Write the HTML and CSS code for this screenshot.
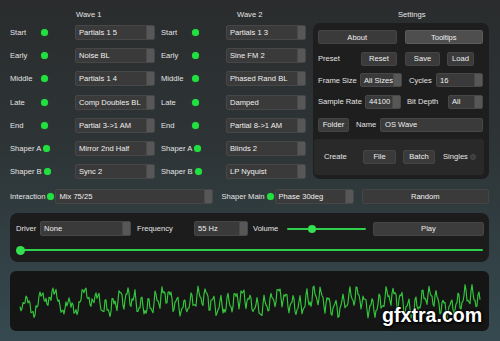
FILE: index.html
```html
<!DOCTYPE html>
<html>
<head>
<meta charset="utf-8">
<link rel="stylesheet" href="styles.css">
</head>
<body>
<div class="app">
  <div class="top">
    <div class="col wave">
      <div class="hdr h1">Wave 1</div>
      <div class="rows">
        <div class="row"><span class="lab">Start</span><span class="dot"></span><div class="dd"><span>Partials 1 5</span><i></i></div></div>
        <div class="row"><span class="lab">Early</span><span class="dot"></span><div class="dd"><span>Noise BL</span><i></i></div></div>
        <div class="row"><span class="lab">Middle</span><span class="dot"></span><div class="dd"><span>Partials 1 4</span><i></i></div></div>
        <div class="row"><span class="lab">Late</span><span class="dot"></span><div class="dd"><span>Comp Doubles BL</span><i></i></div></div>
        <div class="row"><span class="lab">End</span><span class="dot"></span><div class="dd"><span>Partial 3-&gt;1 AM</span><i></i></div></div>
        <div class="row"><span class="lab">Shaper A</span><span class="dot"></span><div class="dd"><span>Mirror 2nd Half</span><i></i></div></div>
        <div class="row"><span class="lab">Shaper B</span><span class="dot"></span><div class="dd"><span>Sync 2</span><i></i></div></div>
      </div>
    </div>
    <div class="col wave">
      <div class="hdr h2">Wave 2</div>
      <div class="rows">
        <div class="row"><span class="lab">Start</span><span class="dot"></span><div class="dd"><span>Partials 1 3</span><i></i></div></div>
        <div class="row"><span class="lab">Early</span><span class="dot"></span><div class="dd"><span>Sine FM 2</span><i></i></div></div>
        <div class="row"><span class="lab">Middle</span><span class="dot"></span><div class="dd"><span>Phased Rand BL</span><i></i></div></div>
        <div class="row"><span class="lab">Late</span><span class="dot"></span><div class="dd"><span>Damped</span><i></i></div></div>
        <div class="row"><span class="lab">End</span><span class="dot"></span><div class="dd"><span>Partial 8-&gt;1 AM</span><i></i></div></div>
        <div class="row"><span class="lab">Shaper A</span><span class="dot"></span><div class="dd"><span>Blinds 2</span><i></i></div></div>
        <div class="row"><span class="lab">Shaper B</span><span class="dot"></span><div class="dd"><span>LP Nyquist</span><i></i></div></div>
      </div>
    </div>
    <div class="col settings">
      <div class="hdr h3">Settings</div>
      <div class="panel">
        <div class="srow">
          <div class="btn grow">About</div>
          <div class="btn grow sel">Tooltips</div>
        </div>
        <div class="srow">
          <span class="slab w43">Preset</span>
          <div class="btn w36">Reset</div>
          <div class="btn w35 ml8">Save</div>
          <div class="btn w27 ml7">Load</div>
        </div>
        <div class="srow">
          <span class="slab w42">Frame Size</span>
          <div class="dd w42"><span>All Sizes</span><i></i></div>
          <span class="slab w27 ml7">Cycles</span>
          <div class="dd w47"><span>16</span><i></i></div>
        </div>
        <div class="srow">
          <span class="slab w47">Sample Rate</span>
          <div class="dd w36"><span>44100</span><i></i></div>
          <span class="slab w41 ml6">Bit Depth</span>
          <div class="dd w35"><span>All</span><i></i></div>
        </div>
        <div class="srow folder">
          <div class="btn w31">Folder</div>
          <span class="slab w24 ml7">Name</span>
          <div class="txt">OS Wave</div>
        </div>
        <div class="sub">
          <span class="slab w39">Create</span>
          <div class="btn w33">File</div>
          <div class="btn w32 ml7">Batch</div>
          <span class="slab ml8 w27">Singles</span>
          <span class="radio"></span>
        </div>
      </div>
    </div>
  </div>

  <div class="mid">
    <span class="lab">Interaction</span><span class="dot"></span>
    <div class="dd w158"><span>Mix 75/25</span><i></i></div>
    <span class="lab ml8">Shaper Main</span><span class="dot"></span>
    <div class="dd w79"><span>Phase 30deg</span><i></i></div>
    <div class="btn random ml8 tall">Random</div>
  </div>

  <div class="driver">
    <div class="drow">
      <span class="lab w24">Driver</span>
      <div class="dd w91"><span>None</span><i></i></div>
      <span class="lab w57 ml6">Frequency</span>
      <div class="dd w54"><span>55 Hz</span><i></i></div>
      <span class="lab w33 ml5">Volume</span>
      <div class="slider vol"><b style="left:21px"></b></div>
      <div class="btn play ml7">Play</div>
    </div>
    <div class="slider pos"><b style="left:0px"></b></div>
  </div>

  <div class="scope">
    <svg width="479" height="60" viewBox="0 0 479 60"><polyline id="wave" fill="none" stroke="#34c83c" stroke-width="1.15" stroke-linejoin="round" points=""/></svg>
  </div>

  <div class="mark">gfxtra.com</div>
</div>
<script src="script.js"></script>
</body>
</html>
```

FILE: styles.css
```css
* { box-sizing: border-box; }
html, body { margin: 0; padding: 0; }
body {
  width: 500px; height: 341px; overflow: hidden;
  font-family: "Liberation Sans", Arial, sans-serif;
  font-size: 7.6px; color: #e4e4e4;
  background: linear-gradient(180deg, #2a2c2d 0%, #2e3537 45%, #354a50 100%);
}
.app { position: relative; width: 500px; height: 341px; padding: 0 11px 0 10px; }
.top { display: flex; }
.col.wave { width: 145px; }
.col.wave + .col.wave { margin-left: 6px; }
.col.settings { width: 176px; margin-left: 7px; }
.hdr { height: 15px; line-height: 15px; margin-top: 7px; }
.h1 { padding-left: 66px; }
.h2 { padding-left: 76px; }
.h3 { padding-left: 85px; }
.rows { display: flex; flex-direction: column; gap: 8.2px; margin-top: 3px; }
.row { display: flex; align-items: center; height: 15px; }
.lab { display: inline-block; white-space: nowrap; flex: none; }
.wave .lab { min-width: 29px; }
.dot { width: 7px; height: 7px; border-radius: 50%; background: #22e040; flex: none; margin-left: 2px; box-shadow: 0 0 1px #1a9a2c; }
.wave .dd { margin-left: auto; width: 80px; }
.dd {
  display: flex; align-items: center; height: 15px;
  background: #3a3a3a; border: 1px solid #474747; border-radius: 2px;
  color: #f0f0f0; overflow: hidden; flex: none;
}
.dd span { flex: 1; padding-left: 3px; white-space: nowrap; overflow: hidden; }
.dd i { width: 8px; align-self: stretch; background: #575757; border-left: 1px solid #4a4a4a; }
.btn {
  display: flex; align-items: center; justify-content: center;
  height: 14px; background: #3a3a3a; border: 1px solid #454545;
  border-radius: 2px; color: #f0f0f0; flex: none; white-space: nowrap;
}
.btn.sel { background: #4e4e4e; border-color: #5a5a5a; }
.grow { flex: 1; }
.panel {
  margin-top: 1px; background: #1e1e1e; border-radius: 7px;
  padding: 7px 6px 5px 5px; height: 156px;
}
.srow { display: flex; align-items: center; height: 14px; }
.srow + .srow { margin-top: 7.5px; }
.srow:first-child { gap: 8px; }
.srow.folder { margin-top: 9px; }
.slab { display: inline-block; white-space: nowrap; flex: none; }
.srow .dd { height: 14px; }
.txt {
  flex: 1; height: 14px; background: #3a3a3a; border: 1px solid #474747;
  border-radius: 2px; color: #f0f0f0; padding-left: 4px; line-height: 12px;
}
.sub {
  display: flex; align-items: center; height: 36px;
  margin: 7px -1px 0 -4px; padding-left: 10px;
  background: #292929; border-radius: 3px;
}
.radio { width: 6px; height: 6px; border-radius: 50%; background: #3d3d3d; border: 1px solid #4a4a4a; }
.w24 { width: 24px; } .w27 { width: 27px; } .w31 { width: 31px; } .w32 { width: 32px; }
.w33 { width: 33px; } .w35 { width: 35px; } .w36 { width: 36px; } .w37 { width: 37px; }
.w39 { width: 39px; } .w41 { width: 41px; } .w42 { width: 42px; } .w43 { width: 43px; }
.w47 { width: 47px; } .w54 { width: 54px; } .w57 { width: 57px; } .w79 { width: 79px; }
.w91 { width: 91px; } .w158 { width: 158px; }
.ml5 { margin-left: 5px; } .ml6 { margin-left: 6px; }
.ml7 { margin-left: 7px; } .ml8 { margin-left: 8px; }
.mid { display: flex; align-items: center; height: 15px; margin-top: 10px; }
.mid .dot { margin-left: 2px; margin-right: 1px; }
.random { flex: 1; }
.tall { height: 15px; }
.driver {
  margin-top: 9px; height: 49px; background: #1c1c1c; border-radius: 8px;
  padding: 8px 6px 0 6px;
}
.drow { display: flex; align-items: center; height: 15px; }
.slider { position: relative; height: 2px; background: #2fd04c; border-radius: 1px; flex: none; }
.slider b { position: absolute; top: 50%; width: 8px; height: 8px; margin-top: -4px; border-radius: 50%; background: #33e050; }
.slider.vol { width: 79px; margin-left: 1px; }
.play { width: 111px; height: 14px; background: #3c3c3c; }
.slider.pos { margin: 13px 0 0 4px; width: 463px; }
.slider.pos b { width: 9px; height: 9px; margin-top: -4.5px; margin-left: -4px; }
.scope {
  margin-top: 9px; height: 60px; background: #151515; border-radius: 6px; overflow: hidden;
}
.scope svg { display: block; }
.mark {
  position: absolute; left: 382px; top: 303px;
  font: bold 19.6px/24px "Liberation Sans", Arial, sans-serif;
  color: #ffffff; text-shadow: 0 0 3px #000, 0 0 2px #000, 1px 1px 2px #000;
}
```

FILE: script.js
```js
(function () {
  var pts = [];
  var seed = 7;
  function rnd() { seed = (seed * 16807) % 2147483647; return seed / 2147483647; }
  var n1 = 0;
  for (var x = 10; x <= 470; x += 1) {
    var t = x;
    n1 = n1 * 0.5 + (rnd() - 0.5) * 0.8;
    var low = 0.35 * Math.sin(t * 2 * Math.PI / 38 + 1.2);
    var mid = 0.45 * Math.sin(t * 2 * Math.PI / (x < 90 ? 14 : 7.2) + 0.4 * Math.sin(t / 23));
    var hi = 0.22 * Math.sin(t * 2 * Math.PI / 3.3 + 2.0);
    var v = low + mid + hi + n1 * 0.25;
    var y = 31 - v * 17;
    if (y < 10) y = 10; if (y > 50) y = 50;
    pts.push(x + "," + y.toFixed(1));
  }
  document.getElementById("wave").setAttribute("points", pts.join(" "));
})();
```
